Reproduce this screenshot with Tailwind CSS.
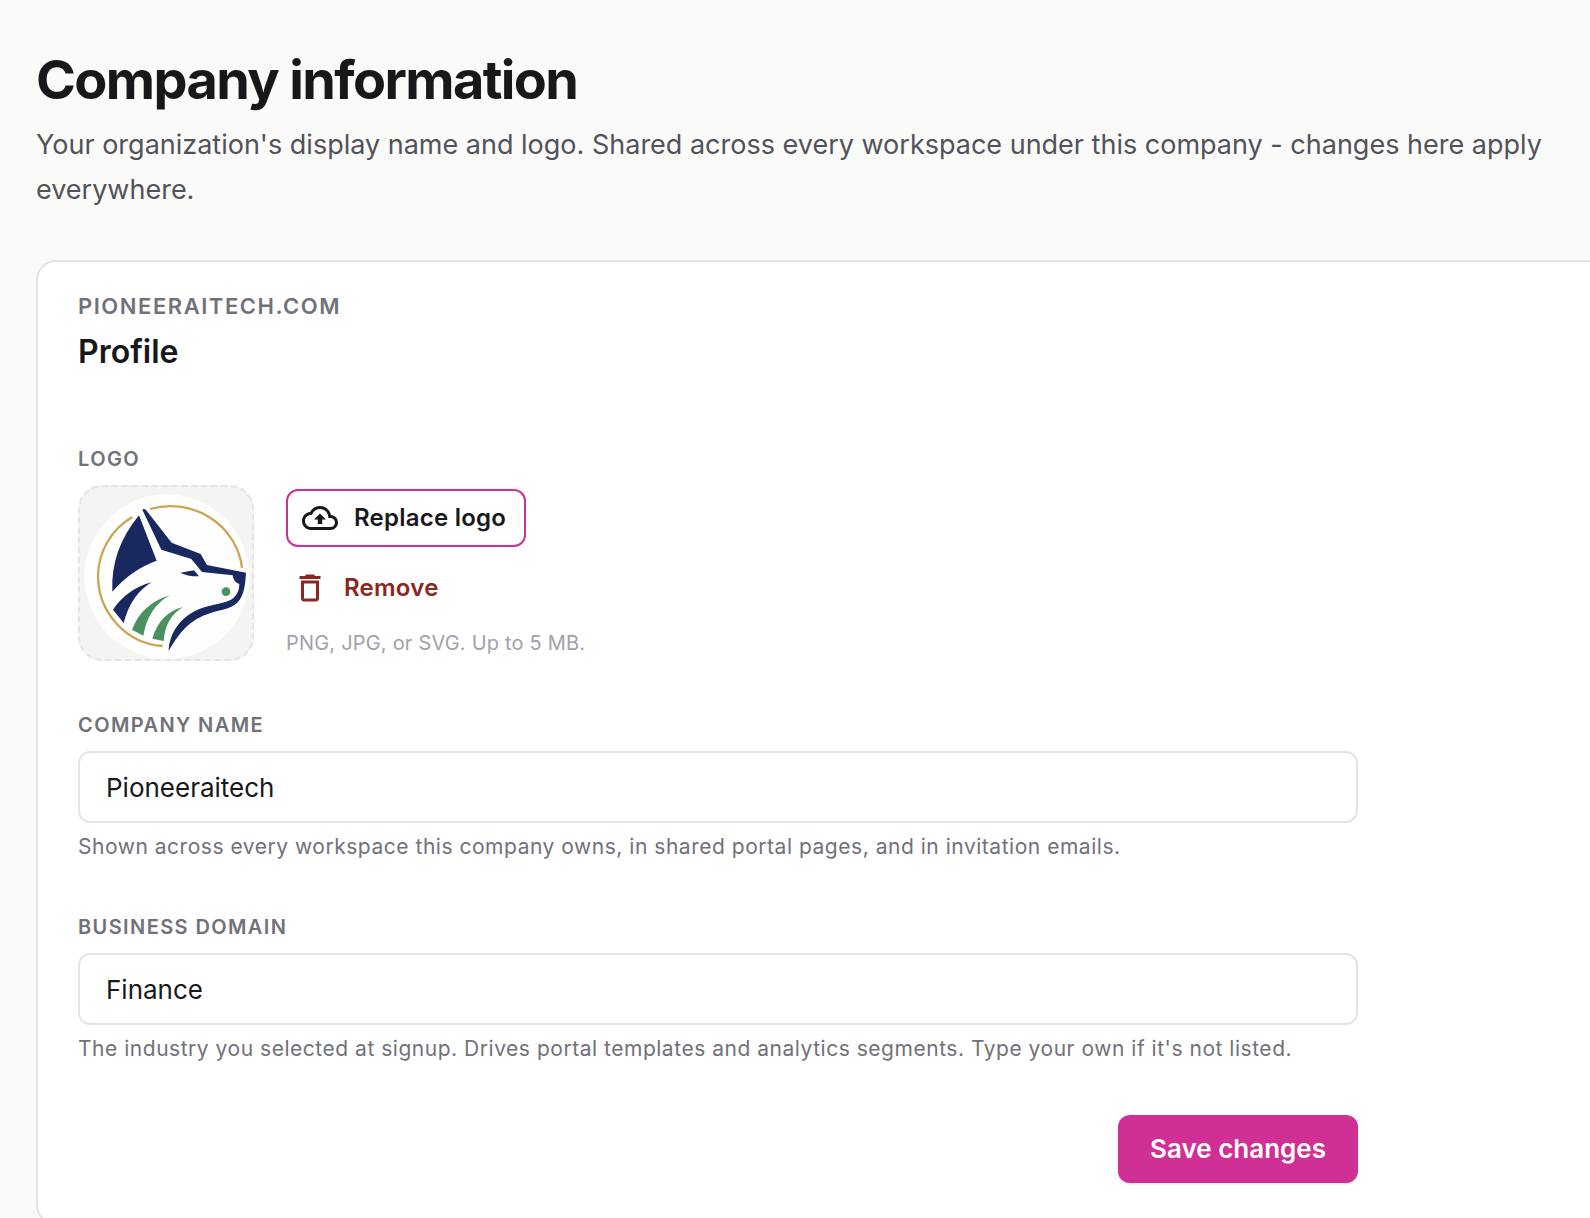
<!DOCTYPE html>
<html lang="en">
<head>
<meta charset="utf-8">
<meta name="viewport" content="width=device-width, initial-scale=1">
<title>Company information</title>
<script src="https://cdn.jsdelivr.net/npm/@tailwindcss/browser@4"></script>
</head>
<body class="min-h-screen overflow-x-hidden bg-[#fafaf9] font-['Inter',sans-serif] text-[#18181b] antialiased">
<main class="flex flex-col gap-12 pt-12 pb-12 pl-9">
  <header class="flex flex-col gap-[10px] pr-9">
    <h1 class="text-[54px] leading-[64px] font-bold tracking-[-0.03em]">Company information</h1>
    <p class="text-[27px] leading-[45px] text-[#52525b]">Your organization's display name and logo. Shared across every workspace under this company - changes here apply everywhere.</p>
  </header>

  <section class="rounded-l-[20px] border-2 border-r-0 border-[#e4e4e4] bg-white px-10 pt-7 pb-10" aria-labelledby="profile-title">
    <p class="text-[22px] leading-8 font-semibold tracking-[0.07em] text-[#71717a]">PIONEERAITECH.COM</p>
    <h2 id="profile-title" class="mt-2 text-[32px] leading-[44px] font-semibold">Profile</h2>

    <form class="mt-[71px] flex max-w-[1280px] flex-col gap-[50px]">
      <div class="flex flex-col gap-3">
        <h3 class="text-[20px] leading-7 font-semibold tracking-[0.07em] text-[#71717a]">LOGO</h3>
        <div class="flex items-center gap-8">
          <div class="size-44 shrink-0 overflow-hidden rounded-3xl border-2 border-dashed border-[#e4e4e4] bg-[#f4f4f3]">
            <svg class="size-full" viewBox="30 36 516 516" role="img" aria-label="Pioneeraitech logo">
              <circle cx="291" cy="305" r="247" fill="#fefefe"/>
              <g fill="none" stroke="#cda552" stroke-width="7">
                <path d="M187 126A208 208 0 0 0 84 303A208 212 0 0 0 278 513"/>
                <path d="M240 102A216 209 0 0 1 516 279"/>
              </g>
              <g fill="#19295f">
                <path d="M207 121L260 257Q184 284 127 350Q121 225 207 121Z"/>
                <path d="M217 104Q222 99 228 105L305 203L392 237L411 270L528 293Q526 340 515 364C502 396 470 402 431 411C370 428 333 462 296 528C298 472 332 425 390 401C430 385 474 387 494 365Q508 350 508 327Q490 322 488 301L396 291L364 252L274 224Z"/>
                <path d="M331 293L372 286L387 304Q354 305 331 293Z"/>
                <path d="M245 322Q184 357 161 444L129 404Q172 341 245 322Z"/>
              </g>
              <g fill="#4b9160">
                <path d="M299 361Q234 398 220 482L186 464Q215 387 299 361Z"/>
                <path d="M339 396Q285 429 281 498L247 491Q269 414 339 396Z"/>
                <circle cx="468" cy="350" r="13"/>
              </g>
            </svg>
          </div>
          <div class="flex flex-col items-start gap-3">
            <button type="button" class="flex h-[58px] items-center gap-4 rounded-xl border-2 border-[#d02f95] px-[14px] pr-[18px] text-[24px] leading-8 font-semibold tracking-[0.01em]">
              <svg class="size-9" viewBox="0 0 24 24" fill="currentColor" aria-hidden="true"><path d="M19.35 10.04C18.67 6.59 15.64 4 12 4 9.11 4 6.6 5.64 5.35 8.04 2.34 8.36 0 10.91 0 14c0 3.31 2.69 6 6 6h13c2.76 0 5-2.24 5-5 0-2.64-2.05-4.78-4.65-4.96zM19 18H6c-2.21 0-4-1.79-4-4 0-2.05 1.53-3.76 3.56-3.97l1.07-.11.5-.95C8.08 7.14 9.94 6 12 6c2.62 0 4.88 1.86 5.39 4.43l.3 1.5 1.53.11c1.56.1 2.78 1.41 2.78 2.96 0 1.65-1.35 3-3 3zM8 13h2.55v3h2.9v-3H16l-4-4z"/></svg>
              Replace logo
            </button>
            <button type="button" class="flex h-[58px] items-center gap-4 rounded-xl px-[6px] text-[24px] leading-8 font-semibold tracking-[0.01em] text-[#8b2620]">
              <svg class="size-9" viewBox="0 0 24 24" fill="currentColor" aria-hidden="true"><path d="M6 19c0 1.1.9 2 2 2h8c1.1 0 2-.9 2-2V7H6v12zM8 9h8v10H8V9zm7.5-5l-1-1h-5l-1 1H5v2h14V4z"/></svg>
              Remove
            </button>
            <p class="text-[20px] leading-7 tracking-[0.01em] text-[#a1a1aa]">PNG, JPG, or SVG. Up to 5 MB.</p>
          </div>
        </div>
      </div>

      <div class="flex flex-col">
        <label for="company-name" class="mb-3 text-[20px] leading-7 font-semibold tracking-[0.07em] text-[#71717a]">COMPANY NAME</label>
        <input id="company-name" type="text" value="Pioneeraitech" class="h-[72px] w-full rounded-xl border-2 border-[#e4e4e4] bg-white px-[26px] text-[26px]">
        <p class="mt-2 text-[21px] leading-8 tracking-[0.025em] text-[#71717a]">Shown across every workspace this company owns, in shared portal pages, and in invitation emails.</p>
      </div>

      <div class="flex flex-col">
        <label for="business-domain" class="mb-3 text-[20px] leading-7 font-semibold tracking-[0.07em] text-[#71717a]">BUSINESS DOMAIN</label>
        <input id="business-domain" type="text" value="Finance" class="h-[72px] w-full rounded-xl border-2 border-[#e4e4e4] bg-white px-[26px] text-[26px]">
        <p class="mt-2 text-[21px] leading-8 tracking-[0.025em] text-[#71717a]">The industry you selected at signup. Drives portal templates and analytics segments. Type your own if it's not listed.</p>
      </div>

      <button type="submit" class="h-[68px] self-end rounded-xl bg-[#d02f95] px-8 text-[26px] leading-8 font-semibold text-white shadow-sm">Save changes</button>
    </form>
  </section>
</main>
</body>
</html>
